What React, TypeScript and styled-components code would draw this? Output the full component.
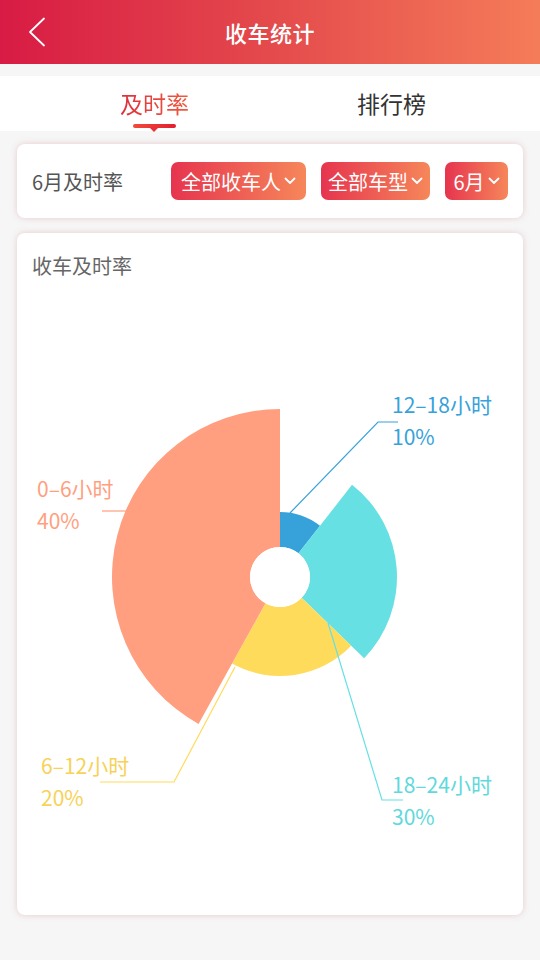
import React from 'react';
import styled, { createGlobalStyle } from 'styled-components';

const GlobalStyle = createGlobalStyle`
  html, body {
    margin: 0;
    padding: 0;
    background: #f6f6f6;
  }
  body {
    font-family: "Noto Sans CJK SC", "Noto Sans", sans-serif;
  }
`;

const Page = styled.div`
  width: 540px;
  height: 960px;
  display: flex;
  flex-direction: column;
  background: #f6f6f6;
  overflow: hidden;
`;

const Header = styled.header`
  position: relative;
  height: 64px;
  flex: none;
  display: flex;
  align-items: center;
  justify-content: center;
  background: linear-gradient(90deg, #d81b44 0%, #e44a4c 50%, #f57c59 100%);
`;

const BackButton = styled.button`
  position: absolute;
  left: 22px;
  top: 14px;
  width: 30px;
  height: 36px;
  padding: 0;
  border: 0;
  background: transparent;
  display: flex;
  align-items: center;
  justify-content: center;
`;

const HeaderTitle = styled.h1`
  margin: 0;
  color: #fff;
  font-size: 22px;
  font-weight: 500;
  letter-spacing: 0.5px;
`;

const TabBar = styled.nav`
  margin-top: 12px;
  height: 55px;
  flex: none;
  display: flex;
  padding: 0 30px 0 36px;
  background: #fff;
`;

const Tab = styled.div<{ $active?: boolean }>`
  position: relative;
  flex: 1;
  display: flex;
  align-items: center;
  justify-content: center;
  font-size: 23px;
  color: #333;
  padding-bottom: 2px;

  span {
    ${({ $active }) =>
      $active &&
      `
      background: linear-gradient(90deg, #de2f3c, #ef5a3e);
      -webkit-background-clip: text;
      background-clip: text;
      color: transparent;
    `}
  }
`;

const Indicator = styled.div`
  position: absolute;
  left: 50%;
  bottom: 3px;
  width: 43px;
  height: 4px;
  margin-left: -22px;
  border-radius: 2px;
  background: linear-gradient(90deg, #f24a3a, #e0202f);

  &::after {
    content: '';
    position: absolute;
    left: 50%;
    top: 3px;
    margin-left: -5px;
    border-left: 5px solid transparent;
    border-right: 5px solid transparent;
    border-top: 5px solid #e8303a;
  }
`;

const Content = styled.main`
  display: flex;
  flex-direction: column;
  gap: 15px;
  padding: 13px 17px 0;
`;

const Card = styled.section`
  background: #fff;
  border-radius: 8px;
  box-shadow: 0 0 6px rgba(205, 120, 130, 0.35);
`;

const FilterCard = styled(Card)`
  height: 74px;
  display: flex;
  align-items: center;
  padding: 0 15px;
  box-sizing: border-box;
`;

const FilterLabel = styled.div`
  font-size: 20px;
  color: #555;
  margin-right: auto;
`;

const FilterGroup = styled.div`
  display: flex;
  gap: 15px;
`;

const FilterButton = styled.button<{ $width: number }>`
  width: ${({ $width }) => $width}px;
  height: 38px;
  padding: 0;
  border: 0;
  border-radius: 7px;
  display: flex;
  align-items: center;
  justify-content: center;
  gap: 3px;
  font-family: inherit;
  font-size: 20px;
  color: #fff;
  background: linear-gradient(90deg, #e6344e 0%, #f6875a 100%);
`;

const ChartCard = styled(Card)`
  height: 682px;
  display: flex;
  flex-direction: column;
  overflow: hidden;
`;

const ChartTitle = styled.h2`
  margin: 0;
  padding: 21px 15px 0;
  font-size: 20px;
  line-height: 24px;
  font-weight: 400;
  color: #666;
`;

const ChartSvg = styled.svg`
  display: block;
  flex: none;
`;

const Chevron = () => (
  <svg width="12" height="8" viewBox="0 0 12 8">
    <path d="M1.5 1.5 L6 6 L10.5 1.5" fill="none" stroke="#fff" strokeWidth="1.8" strokeLinecap="round" strokeLinejoin="round" />
  </svg>
);

const CX = 280;
const CY = 577;
const INNER = 30;

const pt = (r: number, deg: number) => {
  const a = (deg * Math.PI) / 180;
  return [CX + r * Math.sin(a), CY - r * Math.cos(a)];
};

const sectorPath = (r: number, a0: number, a1: number) => {
  const large = a1 - a0 > 180 ? 1 : 0;
  const [x0, y0] = pt(r, a0);
  const [x1, y1] = pt(r, a1);
  const [x2, y2] = pt(INNER, a1);
  const [x3, y3] = pt(INNER, a0);
  return `M${x0} ${y0} A${r} ${r} 0 ${large} 1 ${x1} ${y1} L${x2} ${y2} A${INNER} ${INNER} 0 ${large} 0 ${x3} ${y3} Z`;
};

const slices = [
  {
    name: '12-18小时',
    pct: '10%',
    color: '#37a2da',
    text: '#37a2da',
    r: 65,
    from: 0,
    to: 38,
    line: '290,513 378,422 398,422',
    tx: 392,
    ty: 413,
  },
  {
    name: '18-24小时',
    pct: '30%',
    color: '#67e0e3',
    text: '#5fd9dc',
    r: 117,
    from: 38,
    to: 134,
    line: '328,623 382,800 403,800',
    tx: 392,
    ty: 793,
  },
  {
    name: '6-12小时',
    pct: '20%',
    color: '#ffdb5c',
    text: '#f7d257',
    r: 99,
    from: 134,
    to: 209,
    line: '235,667 174,782 100,782',
    tx: 41,
    ty: 774,
  },
  {
    name: '0-6小时',
    pct: '40%',
    color: '#ff9f7f',
    text: '#ff9f7f',
    r: 168,
    from: 209,
    to: 360,
    line: '126,511 102,511',
    tx: 37,
    ty: 497,
  },
];

export default function App() {
  return (
    <Page>
      <GlobalStyle />
      <Header>
        <BackButton aria-label="返回">
          <svg width="18" height="30" viewBox="0 0 18 30">
            <path d="M16 1.5 L2 15 L16 28.5" fill="none" stroke="#fff" strokeWidth="1.8" strokeLinecap="round" strokeLinejoin="round" />
          </svg>
        </BackButton>
        <HeaderTitle>收车统计</HeaderTitle>
      </Header>

      <TabBar>
        <Tab $active>
          <span>及时率</span>
          <Indicator />
        </Tab>
        <Tab>
          <span>排行榜</span>
        </Tab>
      </TabBar>

      <Content>
        <FilterCard>
          <FilterLabel>6月及时率</FilterLabel>
          <FilterGroup>
            <FilterButton $width={135}>
              全部收车人
              <Chevron />
            </FilterButton>
            <FilterButton $width={109}>
              全部车型
              <Chevron />
            </FilterButton>
            <FilterButton $width={63}>
              6月
              <Chevron />
            </FilterButton>
          </FilterGroup>
        </FilterCard>

        <ChartCard>
          <ChartTitle>收车及时率</ChartTitle>
          <ChartSvg width="506" height="637" viewBox="17 278 506 637">
            {slices.map((s) => (
              <path key={s.name} d={sectorPath(s.r, s.from, s.to)} fill={s.color} />
            ))}
            <circle cx={CX} cy={CY} r={INNER} fill="#fff" />
            {slices.map((s) => (
              <polyline key={`l-${s.name}`} points={s.line} fill="none" stroke={s.color} strokeWidth="1.2" />
            ))}
            {slices.map((s) => (
              <text
                key={`t-${s.name}`}
                x={s.tx}
                y={s.ty}
                fill={s.text}
                fontSize="21"
                fontFamily='"Noto Sans CJK SC", "Noto Sans", sans-serif'
              >
                <tspan x={s.tx}>{s.name.replace('-', '–')}</tspan>
                <tspan x={s.tx} dy="32">
                  {s.pct}
                </tspan>
              </text>
            ))}
          </ChartSvg>
        </ChartCard>
      </Content>
    </Page>
  );
}
